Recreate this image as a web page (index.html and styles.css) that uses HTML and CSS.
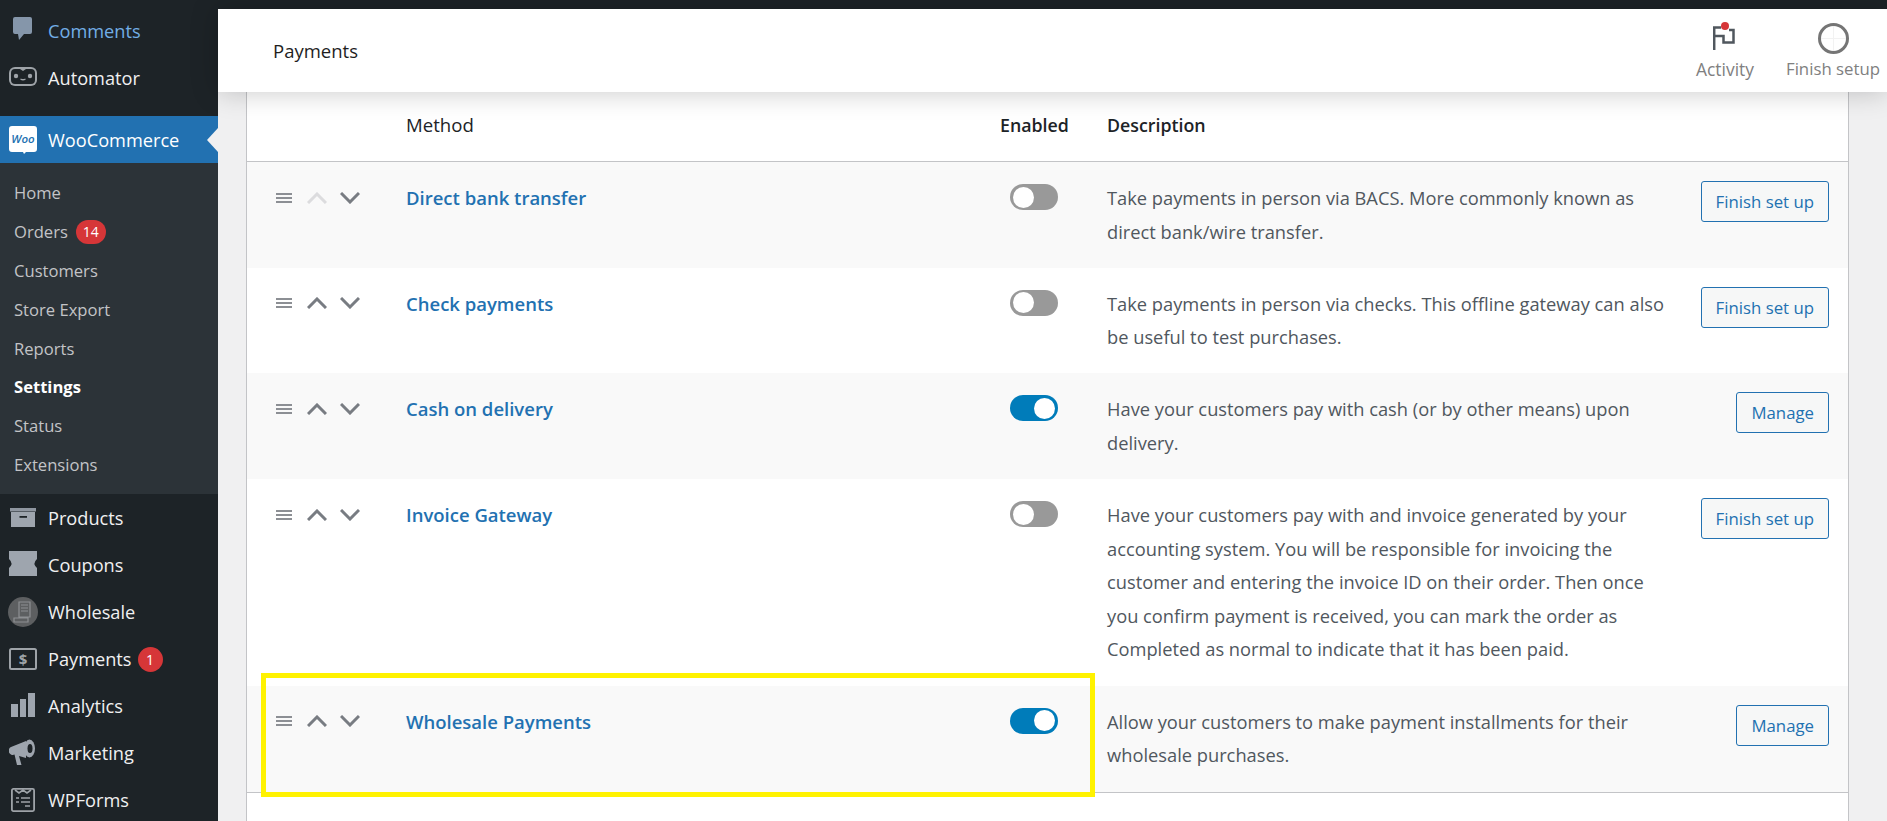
FILE: index.html
```html
<!DOCTYPE html>
<html lang="en">
<head>
<meta charset="utf-8">
<title>Payments</title>
<link rel="stylesheet" href="styles.css">
</head>
<body>
<div class="page">
  <aside class="sidebar">
    <nav class="menu">
      <a class="item item-comments"><svg class="ic" viewBox="0 0 28 28"><path d="M6 0h15a2 2 0 0 1 2 2v13a2 2 0 0 1-2 2h-6l-5 6-1-6H6a2 2 0 0 1-2-2V2a2 2 0 0 1 2-2z" fill="#8596aa"/></svg><span>Comments</span></a>
      <a class="item"><svg class="ic" viewBox="0 0 28 28"><path d="M6 3h16a6 6 0 0 1 6 6v7a6 6 0 0 1-6 6H6a6 6 0 0 1-6-6V9a6 6 0 0 1 6-6z" fill="#9ea3a8"/><path d="M6 5h5l3 2 3-2h5a4 4 0 0 1 4 4v7a4 4 0 0 1-4 4H6a4 4 0 0 1-4-4V9a4 4 0 0 1 4-4z" fill="#1d2327"/><circle cx="7" cy="12" r="2.200" fill="#9ea3a8"/><circle cx="21" cy="12" r="2.200" fill="#9ea3a8"/><path d="M11.500 15q2.500 1.500 5 0" stroke="#9ea3a8" stroke-width="1.300" fill="none"/></svg><span>Automator</span></a>
    </nav>
    <div class="woo">
      <a class="item item-active"><svg class="ic" viewBox="0 0 28 28"><path d="M3 0h22a3 3 0 0 1 3 3v20a3 3 0 0 1-3 3h-8l-2 2-1-2H3a3 3 0 0 1-3-3V3a3 3 0 0 1 3-3z" fill="#fff"/><text x="14" y="16.500" class="woo-text">Woo</text></svg><span>WooCommerce</span></a>
      <ul class="submenu">
        <li>Home</li>
        <li>Orders <b class="badge badge-wide">14</b></li>
        <li>Customers</li>
        <li>Store Export</li>
        <li>Reports</li>
        <li class="sub-current">Settings</li>
        <li>Status</li>
        <li>Extensions</li>
      </ul>
    </div>
    <nav class="menu menu-lower">
      <a class="item"><svg class="ic" viewBox="0 0 28 28"><path d="M1 4h26v3.500H1z" fill="#8f96a0"/><path d="M2 8h24v15H2z" fill="#9ea5ae"/><path d="M10.500 12h7.500v1.800h-7.500z" fill="#1d2327"/></svg><span>Products</span></a>
      <a class="item"><svg class="ic" viewBox="0 0 28 28"><path d="M0 0h28v8q-5 4.500 0 9v8H0v-8q5-4.500 0-9z" fill="#9ea5ae"/></svg><span>Coupons</span></a>
      <a class="item"><svg class="ic ic-large" viewBox="0 0 30 30"><circle cx="15" cy="15" r="15" fill="#5d5f61"/><path d="M11 5h11v15H11zM6 21h14v4H6z" fill="none" stroke="#8e9093" stroke-width="1.200"/><path d="M13 8h7M13 11h7M13 14h7" stroke="#8e9093" stroke-width="1.200"/></svg><span>Wholesale</span></a>
      <a class="item"><svg class="ic" viewBox="0 0 28 28"><rect x="1" y="4" width="26" height="20" rx="1.500" fill="none" stroke="#9ea3a8" stroke-width="2"/><text x="14" y="19.500" class="dollar">$</text></svg><span>Payments</span><b class="badge">1</b></a>
      <a class="item"><svg class="ic" viewBox="0 0 28 28"><path d="M2 12h7v13H2zM11 7h6v18h-6zM19 1h7v24h-7z" fill="#9ea5ae"/></svg><span>Analytics</span></a>
      <a class="item"><svg class="ic" viewBox="0 0 28 28"><path d="M2 8l15-6v17L10 17l2.500 9H8L5.500 15.500A4 4 0 0 1 2 8z" fill="#9ea5ae"/><ellipse cx="20.500" cy="9.500" rx="5.500" ry="9" fill="#9ea5ae"/><ellipse cx="21" cy="9.500" rx="2.500" ry="4.500" fill="#1d2327"/></svg><span>Marketing</span></a>
      <a class="item"><svg class="ic" viewBox="0 0 28 28"><rect x="2.900" y="2.900" width="22.200" height="22.200" rx="1.500" fill="none" stroke="#9ea3a8" stroke-width="1.800"/><path d="M6 4l4 3 4-3 4 3 4-3M7 12h3M12 12h9M7 16h3M12 16h9M16 20h5" stroke="#9ea3a8" stroke-width="1.600" fill="none"/></svg><span>WPForms</span></a>
    </nav>
  </aside>
  <main class="main">
    <div class="admin-bar"></div>
    <header class="topbar">
      <h1 class="title">Payments</h1>
      <div class="top-actions">
        <div class="top-action">
          <svg class="top-icon" viewBox="0 0 24 30"><path d="M1.200 28V5.500H8M1.200 14H10.500V20.500H20.500V8H16" fill="none" stroke="#50575e" stroke-width="2.500"/><circle cx="12" cy="4" r="4" fill="#d63638"/></svg>
          <span>Activity</span>
        </div>
        <div class="top-action">
          <span class="ring"></span>
          <span class="top-label-wide">Finish setup</span>
        </div>
      </div>
    </header>
    <div class="content">
      <div class="card">
      <table class="methods">
        <thead>
          <tr><th class="c-sort"></th><th class="c-name th-method">Method</th><th class="c-status">Enabled</th><th class="c-desc">Description</th><th class="c-act"></th></tr>
        </thead>
        <tbody>
          <tr class="alt">
            <td class="c-sort"><div class="sort"><svg class="drag" viewBox="0 0 16 12"><path d="M0 1h16v2H0zM0 5h16v2H0zM0 9h16v2H0z"/></svg><svg class="chev chev-off" viewBox="0 0 20 12"><path d="M1 11l9-9 9 9"/></svg><svg class="chev" viewBox="0 0 20 12"><path d="M1 1l9 9 9-9"/></svg></div></td>
            <td class="c-name"><a class="name">Direct bank transfer</a></td>
            <td class="c-status"><span class="toggle"></span></td>
            <td class="c-desc">Take payments in person via BACS. More commonly known as direct bank/wire transfer.</td>
            <td class="c-act"><a class="btn">Finish set up</a></td>
          </tr>
          <tr>
            <td class="c-sort"><div class="sort"><svg class="drag" viewBox="0 0 16 12"><path d="M0 1h16v2H0zM0 5h16v2H0zM0 9h16v2H0z"/></svg><svg class="chev" viewBox="0 0 20 12"><path d="M1 11l9-9 9 9"/></svg><svg class="chev" viewBox="0 0 20 12"><path d="M1 1l9 9 9-9"/></svg></div></td>
            <td class="c-name"><a class="name">Check payments</a></td>
            <td class="c-status"><span class="toggle"></span></td>
            <td class="c-desc">Take payments in person via checks. This offline gateway can also be useful to test purchases.</td>
            <td class="c-act"><a class="btn">Finish set up</a></td>
          </tr>
          <tr class="alt">
            <td class="c-sort"><div class="sort"><svg class="drag" viewBox="0 0 16 12"><path d="M0 1h16v2H0zM0 5h16v2H0zM0 9h16v2H0z"/></svg><svg class="chev" viewBox="0 0 20 12"><path d="M1 11l9-9 9 9"/></svg><svg class="chev" viewBox="0 0 20 12"><path d="M1 1l9 9 9-9"/></svg></div></td>
            <td class="c-name"><a class="name">Cash on delivery</a></td>
            <td class="c-status"><span class="toggle toggle-on"></span></td>
            <td class="c-desc">Have your customers pay with cash (or by other means) upon delivery.</td>
            <td class="c-act"><a class="btn">Manage</a></td>
          </tr>
          <tr>
            <td class="c-sort"><div class="sort"><svg class="drag" viewBox="0 0 16 12"><path d="M0 1h16v2H0zM0 5h16v2H0zM0 9h16v2H0z"/></svg><svg class="chev" viewBox="0 0 20 12"><path d="M1 11l9-9 9 9"/></svg><svg class="chev" viewBox="0 0 20 12"><path d="M1 1l9 9 9-9"/></svg></div></td>
            <td class="c-name"><a class="name">Invoice Gateway</a></td>
            <td class="c-status"><span class="toggle"></span></td>
            <td class="c-desc">Have your customers pay with and invoice generated by your accounting system. You will be responsible for invoicing the customer and entering the invoice ID on their order. Then once you confirm payment is received, you can mark the order as Completed as normal to indicate that it has been paid.</td>
            <td class="c-act"><a class="btn">Finish set up</a></td>
          </tr>
          <tr class="alt last">
            <td class="c-sort"><div class="sort"><svg class="drag" viewBox="0 0 16 12"><path d="M0 1h16v2H0zM0 5h16v2H0zM0 9h16v2H0z"/></svg><svg class="chev" viewBox="0 0 20 12"><path d="M1 11l9-9 9 9"/></svg><svg class="chev" viewBox="0 0 20 12"><path d="M1 1l9 9 9-9"/></svg></div></td>
            <td class="c-name"><a class="name">Wholesale Payments</a></td>
            <td class="c-status"><span class="toggle toggle-on"></span></td>
            <td class="c-desc">Allow your customers to make payment installments for their wholesale purchases.</td>
            <td class="c-act"><a class="btn">Manage</a></td>
          </tr>
        </tbody>
      </table>
      </div>
      <div class="highlight"></div>
    </div>
  </main>
</div>
</body>
</html>
```
FILE: styles.css
```css
* { box-sizing: border-box; }
html, body { margin: 0; height: 100%; overflow: hidden; }
body { background: #f0f0f1; font-family: "Open Sans", "Noto Sans", sans-serif; color: #3c434a; }
.page { display: flex; height: 821px; }

.sidebar { width: 218px; flex: none; background: #1d2327; padding-top: 7px; color: #f0f0f1; font-size: 18.200px; }
.menu { display: flex; flex-direction: column; }
.menu-lower { margin-top: 1px; }
.item { display: flex; align-items: center; height: 47px; padding-left: 9px; position: relative; }
.item > span { margin-left: 11px; }
.ic { width: 28px; height: 28px; flex: none; }
.ic-large { width: 30px; height: 30px; margin-left: -1px; margin-right: -1px; }
.item-comments { color: #72aee6; }
.woo { margin-top: 15px; }
.item-active { background: #2271b1; color: #fff; }
.item-active::after { content: ""; position: absolute; right: 0; top: 12px; border: 12px solid transparent; border-right: 11px solid #f0f0f1; border-left-width: 0; }
.woo-text { font: italic 600 11.500px "Open Sans", sans-serif; fill: #2271b1; text-anchor: middle; }
.dollar { font: 700 15px "Open Sans", sans-serif; fill: #9ea3a8; text-anchor: middle; }
.submenu { list-style: none; margin: 0; padding: 11px 0 9.600px; background: #2c3338; color: #c3c4c7; font-size: 16.600px; }
.submenu li { height: 38.800px; padding: 0 0 1px 14px; display: flex; align-items: center; }
.sub-current { color: #fff; font-weight: 700; }
.badge { display: inline-flex; align-items: center; justify-content: center; min-width: 25px; height: 25px; border-radius: 13px; background: #d63638; color: #fff; font-size: 14px; font-weight: 400; margin-left: 6px; }
.badge-wide { min-width: 30px; height: 24px; margin-left: 8px; }

.main { flex: 1; min-width: 0; display: flex; flex-direction: column; }
.admin-bar { height: 9px; background: #1d2327; flex: none; }
.topbar { height: 83px; flex: none; display: flex; justify-content: space-between; background: #fff; padding-left: 55px; position: relative; z-index: 2; box-shadow: 0 0 26px rgba(0,0,0,.22); }
.title { margin: 0; align-self: center; font-size: 18.500px; font-weight: 400; color: #1e1e1e; }
.top-actions { display: flex; }
.top-action { display: flex; flex-direction: column; align-items: center; width: 108px; padding-top: 13px; font-size: 17.400px; line-height: 22px; color: #808080; }
.top-label-wide { font-size: 16.800px; }
.top-icon { width: 24px; height: 30px; margin-bottom: 6px; }
.ring { width: 31px; height: 31px; border: 3px solid #757575; border-radius: 50%; margin: 1px 0 4px; background: linear-gradient(#f2f2f2, #f2f2f2) center / 100% 1px no-repeat, linear-gradient(#f2f2f2, #f2f2f2) center / 1px 100% no-repeat; }

.content { flex: 1; padding: 0 38px 0 28px; position: relative; }
.card { height: 100%; background: #fff; border-left: 1px solid #c3c4c7; border-right: 1px solid #c3c4c7; }
.methods { width: 100%; border-collapse: separate; border-spacing: 0; table-layout: fixed; font-size: 18.300px; line-height: 33.600px; color: #50575e; }
.methods th { height: 70px; text-align: left; font-weight: 600; font-size: 17.800px; color: #1d2327; border-bottom: 1px solid #c3c4c7; padding: 0 0 2px; }
.methods .th-method { font-weight: 400; font-size: 18.600px; padding-bottom: 4px; }
.methods td { padding: 19px 0 19.500px; vertical-align: top; }
.c-sort { width: 159px; }
.c-status { width: 107px; }
.c-desc { width: 573px; }
.c-act { width: 168px; }
.methods td.c-desc { padding: 19px 15px 19.500px 0; }
.methods td.c-status { padding-top: 22px; padding-left: 10px; }
.methods td.c-act { text-align: right; padding-right: 19px; }
.alt { background: #f9f9f9; }
.methods .last td { border-bottom: 1px solid #c3c4c7; padding-bottom: 20.500px; }
.sort { display: flex; align-items: center; gap: 13px; padding-left: 29px; height: 33px; }
.drag { width: 16px; height: 12px; fill: #8c8f94; margin-right: 2px; }
.chev { width: 20px; height: 12px; fill: none; stroke: #787c82; stroke-width: 3; }
.chev-off { stroke: #dcdcde; }
.name { color: #2271b1; font-weight: 600; font-size: 18.500px; }
.toggle { display: block; width: 48px; height: 26px; border-radius: 13px; background: #999; position: relative; }
.toggle::before { content: ""; position: absolute; left: 3px; top: 2.500px; width: 21px; height: 21px; border-radius: 50%; background: #fff; }
.toggle-on { background: #007cba; }
.toggle-on::before { left: auto; right: 3px; }
.btn { display: inline-block; border: 1px solid #2271b1; border-radius: 3px; color: #2271b1; background: #f6f7f7; font-size: 16.800px; line-height: 39px; padding: 0 14px; vertical-align: top; }
.highlight { position: absolute; left: 43px; top: 581px; width: 834px; height: 124px; border: 5px solid #fff200; pointer-events: none; }
```
